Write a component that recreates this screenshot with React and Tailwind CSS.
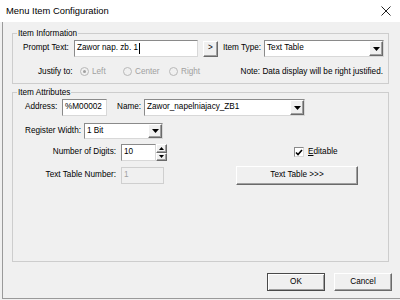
import React from 'react';

const bevel =
  'border border-t-white border-l-white border-r-[#6a6a6a] border-b-[#6a6a6a] shadow-[inset_-1px_-1px_0_#a0a0a0] bg-[#f0f0f0]';
const sunken =
  'border border-t-[#8a8a8a] border-l-[#8a8a8a] border-r-[#d8d8d8] border-b-[#d8d8d8]';

function DownArrow() {
  return (
    <svg width="7" height="4" viewBox="0 0 7 4">
      <path d="M0 0h7L3.5 4z" fill="#000" />
    </svg>
  );
}

function Combo({ className, value }) {
  return (
    <div className={`flex items-stretch bg-white ${sunken} ${className}`}>
      <span className="flex flex-1 items-center pl-[2px] leading-none">{value}</span>
      <span className={`flex w-[14px] items-center justify-center ${bevel}`}>
        <DownArrow />
      </span>
    </div>
  );
}

function Edit({ className, value, caret, disabled }) {
  return (
    <div
      className={`flex items-center pl-[2px] leading-none ${
        disabled ? 'border border-[#cfcfcf] bg-[#f0f0f0] text-[#a0a0a0]' : `bg-white ${sunken}`
      } ${className}`}
    >
      {value}
      {caret && <span className="ml-[1px] inline-block h-[11px] w-[1px] bg-black" />}
    </div>
  );
}

function Radio({ label, checked }) {
  return (
    <div className="flex items-center gap-[3px] text-[#a0a0a0]">
      <span className="flex h-[9px] w-[9px] items-center justify-center rounded-full border border-[#b8b8b8] bg-[#f0f0f0]">
        {checked && <span className="h-[3px] w-[3px] rounded-full bg-[#a0a0a0]" />}
      </span>
      <span>{label}</span>
    </div>
  );
}

export default function App() {
  return (
    <div className="h-[300px] w-[400px] overflow-hidden whitespace-nowrap bg-[#f0f0f0] font-['Liberation_Sans',Arial,sans-serif] text-[8.2px] text-black">
      {/* title bar */}
      <div className="flex h-[22px] items-center justify-between bg-white pl-[6px] pr-[9px]">
        <span className="text-[9.4px]">Menu Item Configuration</span>
        <svg width="10" height="10" viewBox="0 0 10 10">
          <path d="M0.5 0.5l9 9M9.5 0.5l-9 9" stroke="#222" strokeWidth="1" />
        </svg>
      </div>

      <div className="ml-[2px] flex h-[277px] flex-col border-b border-l border-[#9a9a9a]">
        {/* Item Information */}
        <fieldset className="ml-[9px] mt-[5px] w-[377px] border border-[#cdcdcd] pb-[4px]">
          <legend className="ml-[4px] px-[1px] leading-[13px]">Item Information</legend>
          <div className="flex h-[17px] items-center pl-[10px]">
            <span className="w-[51px]">Prompt Text:</span>
            <Edit className="h-[17px] w-[124px]" value="Zawor nap. zb. 1" caret />
            <div className={`ml-[5px] flex h-[16px] w-[15px] items-center justify-center ${bevel}`}>&gt;</div>
            <span className="ml-[5px] w-[41px]">Item Type:</span>
            <Combo className="h-[17px] w-[120px]" value="Text Table" />
          </div>
          <div className="mt-[8px] flex h-[14px] items-center pl-[25px]">
            <span className="w-[42px]">Justify to:</span>
            <div className="w-[43px]"><Radio label="Left" checked /></div>
            <div className="w-[46px]"><Radio label="Center" /></div>
            <div className="w-[60px]"><Radio label="Right" /></div>
            <span className="ml-auto pr-[5px]">Note: Data display will be right justified.</span>
          </div>
        </fieldset>

        {/* Item Attributes */}
        <fieldset className="ml-[9px] mt-[2px] h-[176px] w-[377px] border border-[#cdcdcd]">
          <legend className="ml-[4px] px-[1px] leading-[13px]">Item Attributes</legend>
          <div className="flex h-[17px] items-center pl-[12px]">
            <span className="w-[37px]">Address:</span>
            <Edit className="h-[17px] w-[45px]" value="%M00002" />
            <span className="ml-[10px] w-[27px]">Name:</span>
            <Combo className="h-[17px] w-[161px]" value="Zawor_napelniajacy_ZB1" />
          </div>
          <div className="mt-[7px] flex h-[16px] items-center pl-[12px]">
            <span className="w-[59px]">Register Width:</span>
            <Combo className="h-[16px] w-[79px]" value="1 Bit" />
          </div>
          <div className="mt-[5px] flex h-[17px] items-center">
            <span className="w-[108px] pr-[5px] text-right">Number of Digits:</span>
            <div className="flex h-[17px] w-[46px]">
              <Edit className="h-[17px] flex-1" value="10" />
              <div className="flex w-[11px] flex-col">
                <span className={`flex h-[8.5px] items-center justify-center ${bevel}`}>
                  <svg width="5" height="3" viewBox="0 0 5 3"><path d="M0 3h5L2.5 0z" fill="#000" /></svg>
                </span>
                <span className={`flex h-[8.5px] items-center justify-center ${bevel}`}>
                  <svg width="5" height="3" viewBox="0 0 5 3"><path d="M0 0h5L2.5 3z" fill="#000" /></svg>
                </span>
              </div>
            </div>
            <div className="ml-[127px] flex items-center gap-[4px]">
              <span className={`flex h-[10px] w-[10px] items-center justify-center bg-white ${sunken}`}>
                <svg width="8" height="7" viewBox="0 0 8 7">
                  <path d="M1 3.5l2 2L7 1" stroke="#000" strokeWidth="1.6" fill="none" />
                </svg>
              </span>
              <span><span className="underline">E</span>ditable</span>
            </div>
          </div>
          <div className="mt-[5px] flex h-[19px] items-center">
            <span className="w-[108px] pr-[5px] text-right">Text Table Number:</span>
            <Edit className="h-[17px] w-[43px]" value="1" disabled />
            <div className={`ml-[72px] flex h-[19px] w-[122px] items-center justify-center ${bevel}`}>
              Text Table &gt;&gt;&gt;
            </div>
          </div>
        </fieldset>

        {/* buttons */}
        <div className="mt-[11px] flex justify-end gap-[9px] pr-[8px]">
          <div className="flex h-[18px] w-[58px] items-center justify-center border border-[#4a4a4a] bg-[#f0f0f0] shadow-[inset_1px_1px_0_#fff,inset_-1px_-1px_0_#a0a0a0]">
            OK
          </div>
          <div className={`flex h-[18px] w-[58px] items-center justify-center ${bevel}`}>Cancel</div>
        </div>
      </div>
    </div>
  );
}
